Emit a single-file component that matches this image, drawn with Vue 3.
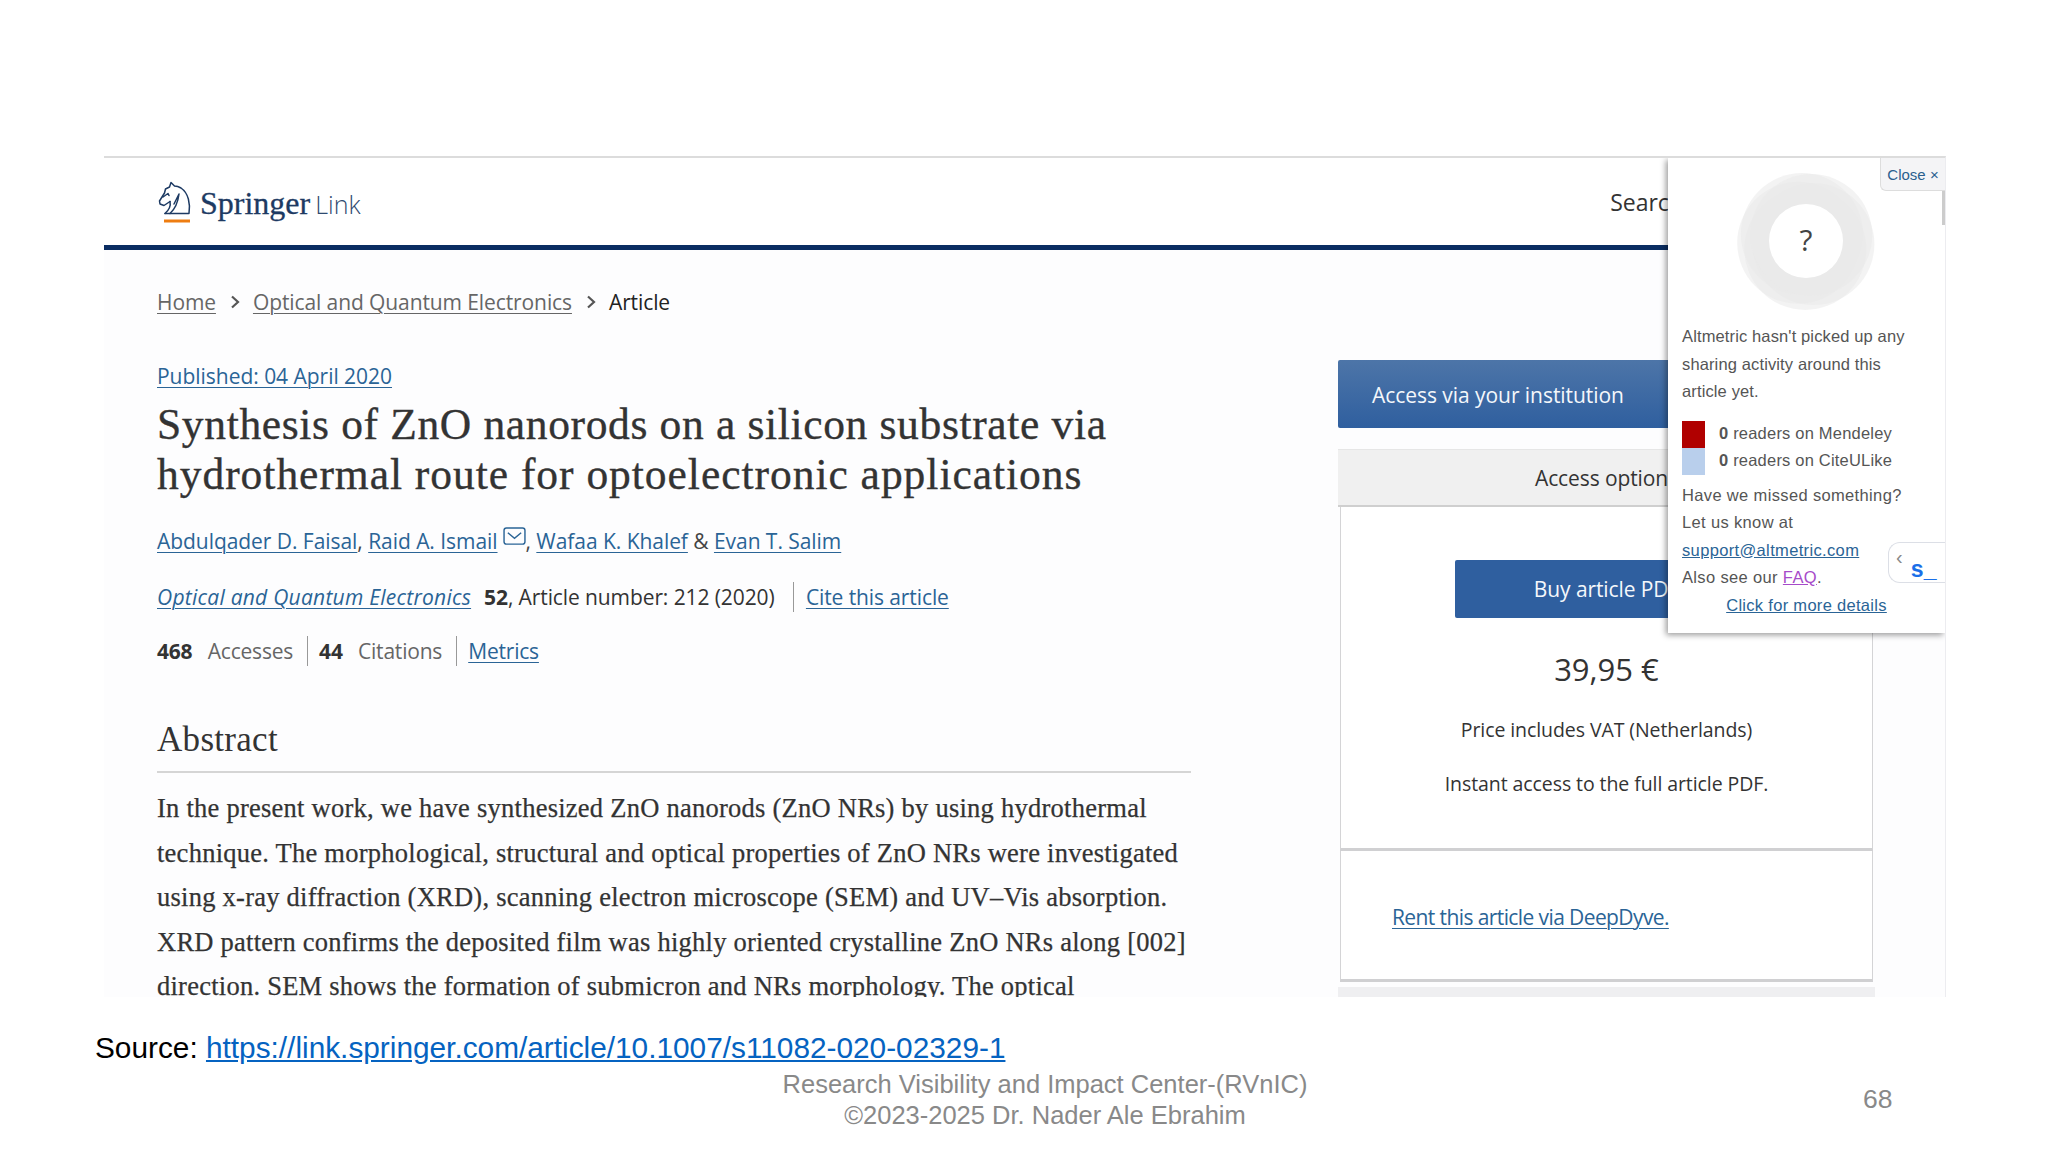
<template>
  <div class="slide">
    <div class="shot">
      <header class="topbar">
        <div class="logo">
          <svg class="logo__horse" viewBox="0 0 36 44" width="36" height="44" fill="none" stroke="#1d3a63" stroke-width="1.5" stroke-linejoin="round" stroke-linecap="round">
            <path d="M8 33.5 H32 C33.5 24 31.5 13 24 8 C21.5 6.5 19 6 17.5 6 L14 2.5 L12.5 7 L8.5 9 L7.5 13 L2.5 21 L3 24 L7 25.5 L13 21.5" />
            <path d="M13 21.5 C14 26 12 30 8 33.5 M22 14 C21 22 18 29 13 33.5 M17 24 L22 14" />
            <path d="M6 17 L11 13.5 L12 15.5" />
            <path d="M7 41 H33" stroke="#ee7d11" stroke-width="3" stroke-linecap="butt" />
          </svg>
          <span class="logo__springer">Springer</span>
          <span class="logo__link">Link</span>
        </div>
        <span class="topbar__search">Search</span>
      </header>

      <div class="page">
        <main class="article">
          <nav class="crumbs">
            <a>Home</a>
            <svg class="crumbs__sep" viewBox="0 0 10 14" width="10" height="14"><path d="M2 1.5 L8 7 L2 12.5" fill="none" stroke="#555" stroke-width="2.2" /></svg>
            <a>Optical and Quantum Electronics</a>
            <svg class="crumbs__sep" viewBox="0 0 10 14" width="10" height="14"><path d="M2 1.5 L8 7 L2 12.5" fill="none" stroke="#555" stroke-width="2.2" /></svg>
            <span>Article</span>
          </nav>
          <a class="link published">Published: 04 April 2020</a>
          <h1 class="title">Synthesis of ZnO nanorods on a silicon substrate via <span class="title__second">hydrothermal route for optoelectronic applications</span></h1>
          <p class="authors">
            <a class="link">Abdulqader D. Faisal</a>, <a class="link">Raid A. Ismail</a>
            <svg class="mail" viewBox="0 0 24 20" width="23" height="19" fill="none" stroke="#2a6496" stroke-width="1.5"><rect x="1" y="1" width="22" height="17" rx="2.5" /><path d="M5 6 L12 12 L19 6" /></svg>, <a class="link">Wafaa K. Khalef</a> &amp; <a class="link">Evan T. Salim</a>
          </p>
          <p class="journal">
            <a class="link journal__name">Optical and Quantum Electronics</a>
            <b>52</b>, Article number: 212 (2020)
            <a class="link journal__cite">Cite this article</a>
          </p>
          <ul class="metrics">
            <li><b>468</b> Accesses</li>
            <li><b>44</b> Citations</li>
            <li><a class="link">Metrics</a></li>
          </ul>
          <h2 class="abstract-title">Abstract</h2>
          <p class="abstract">
            In the present work, we have synthesized ZnO nanorods (ZnO NRs) by using hydrothermal<br />
            technique. The morphological, structural and optical properties of ZnO NRs were investigated<br />
            using x-ray diffraction (XRD), scanning electron microscope (SEM) and UV–Vis absorption.<br />
            XRD pattern confirms the deposited film was highly oriented crystalline ZnO NRs along [002]<br />
            direction. SEM shows the formation of submicron and NRs morphology. The optical
          </p>
        </main>

        <aside class="side">
          <button class="side__institution">Access via your institution</button>
          <div class="side__head">Access options</div>
          <section class="side__box side__box--buy">
            <button class="side__buy">Buy article PDF</button>
            <p class="side__price">39,95 €</p>
            <p class="side__note">Price includes VAT (Netherlands)</p>
            <p class="side__note side__note--last">Instant access to the full article PDF.</p>
          </section>
          <section class="side__box side__box--rent">
            <a class="link">Rent this article via DeepDyve.</a>
          </section>
          <div class="side__foot"></div>
        </aside>
      </div>

      <div class="popup">
        <span class="popup__close">Close ×</span>
        <span class="popup__scroll"></span>
        <div class="donut">
          <svg viewBox="0 0 140 140" width="140" height="140">
            <circle v-for="c in lobes" :key="c.x" :cx="c.x" :cy="c.y" r="61" fill="#e9e9e9" fill-opacity="0.55" />
            <circle cx="70" cy="70" r="37" fill="#fff" />
          </svg>
          <span class="donut__mark">?</span>
        </div>
        <p class="popup__text">Altmetric hasn't picked up any<br />sharing activity around this<br />article yet.</p>
        <div class="readers">
          <div class="readers__row"><i class="readers__swatch readers__swatch--red"></i><span><b>0</b> readers on Mendeley</span></div>
          <div class="readers__row"><i class="readers__swatch readers__swatch--blue"></i><span><b>0</b> readers on CiteULike</span></div>
        </div>
        <p class="popup__text popup__text--help">
          Have we missed something?<br />
          Let us know at<br />
          <a class="popup__link">support@altmetric.com</a><br />
          Also see our <a class="popup__faq">FAQ</a>.
        </p>
        <a class="popup__link popup__more">Click for more details</a>
        <div class="scite"><span class="scite__arrow">‹</span><span class="scite__mark">s_</span></div>
      </div>
    </div>

    <p class="source">Source: <a>https://link.springer.com/article/10.1007/s11082-020-02329-1</a></p>

    <footer class="footer">
      <p class="footer__text">Research Visibility and Impact Center-(RVnIC)<br />©2023-2025 Dr. Nader Ale Ebrahim</p>
      <span class="footer__page">68</span>
    </footer>
  </div>
</template>

<script setup>
// overlapping discs of the empty altmetric badge
const lobes = Array.from({ length: 5 }, (_, i) => {
  const angle = (i / 5) * Math.PI * 2 + 0.4
  return {
    x: +(70 + Math.cos(angle) * 8).toFixed(1),
    y: +(70 + Math.sin(angle) * 8).toFixed(1)
  }
})
</script>

<style>
html,
body {
  margin: 0;
  background: #fff;
}
</style>

<style scoped>
.slide {
  width: 2048px;
  height: 1152px;
  overflow: hidden;
  background: #fff;
  font-family: "Open Sans", sans-serif;
}

p,
h1,
h2,
ul {
  margin: 0;
  padding: 0;
}

.shot {
  position: relative;
  width: 1842px;
  height: 841px;
  margin: 156px 0 0 104px;
  overflow: hidden;
  background: #fdfdfe;
  border-top: 2px solid #dcdcdc;
  border-right: 1px solid #ececf0;
  box-sizing: border-box;
}

.topbar {
  display: flex;
  align-items: center;
  justify-content: space-between;
  height: 87px;
  padding: 0 262px 0 53px;
  background: #fff;
  border-bottom: 5px solid #0a2d62;
}

.logo {
  display: flex;
  align-items: baseline;
  padding-top: 6px;
}

.logo__horse {
  align-self: center;
  margin-right: 7px;
  margin-top: -5px;
}

.logo__springer {
  font-family: "Liberation Serif", serif;
  font-size: 32px;
  color: #1d3a63;
  -webkit-text-stroke: 0.3px #1d3a63;
}

.logo__link {
  margin-left: 5px;
  font-size: 25px;
  font-weight: 300;
  color: #2f4a70;
}

.topbar__search {
  font-size: 23px;
  color: #333;
}

.page {
  display: flex;
  padding-left: 53px;
  color: #333;
}

.article {
  width: 1034px;
  flex: none;
}

.link,
.crumbs a {
  text-decoration: underline;
  text-underline-offset: 3px;
  text-decoration-thickness: 1px;
}

.link {
  color: #2a6496;
}

.crumbs {
  display: flex;
  align-items: center;
  height: 30px;
  margin-top: 37px;
  font-size: 21px;
  letter-spacing: -0.1px;
  color: #222;
}

.crumbs a {
  color: #666;
}

.crumbs__sep {
  margin: 0 13px 0 14px;
}

.published {
  display: block;
  margin-top: 44px;
  height: 30px;
  line-height: 30px;
  font-size: 21px;
  letter-spacing: -0.03px;
}

.title {
  margin-top: 8px;
  width: 1020px;
  font-family: "Liberation Serif", serif;
  font-size: 43.5px;
  line-height: 50px;
  font-weight: 400;
  letter-spacing: 0.65px;
  color: #333;
  -webkit-text-stroke: 0.35px #333;
}

.title__second {
  display: block;
  letter-spacing: 0.97px;
}

.authors,
.journal,
.metrics {
  font-size: 21px;
  line-height: 30px;
  letter-spacing: -0.1px;
}

.authors {
  margin-top: 27px;
  color: #444;
  letter-spacing: -0.05px;
}

.mail {
  margin-left: 5px;
  vertical-align: 3px;
}

.journal {
  margin-top: 26px;
}

.journal__name {
  font-style: italic;
  margin-right: 13px;
  letter-spacing: 0.25px;
}

.journal__cite {
  margin-left: 13px;
  padding-left: 12px;
  border-left: 1px solid #999;
  display: inline-block;
}

.metrics {
  display: flex;
  margin-top: 24px;
  list-style: none;
  color: #666;
  letter-spacing: -0.2px;
}

.metrics b {
  margin-right: 10px;
  color: #333;
}

.metrics li + li {
  margin-left: 14px;
  padding-left: 11px;
  border-left: 1px solid #999;
}

.abstract-title {
  margin-top: 53px;
  padding-bottom: 12px;
  height: 40px;
  line-height: 42px;
  font-family: "Liberation Serif", serif;
  font-size: 35px;
  font-weight: 400;
  letter-spacing: 0.3px;
  color: #333;
  border-bottom: 2px solid #d5d5d5;
}

.abstract {
  margin-top: 13px;
  font-family: "Liberation Serif", serif;
  font-size: 26.5px;
  line-height: 44.6px;
  letter-spacing: 0.25px;
  white-space: nowrap;
  color: #333;
  -webkit-text-stroke: 0.25px #333;
}

.side {
  width: 537px;
  margin-left: 147px;
  flex: none;
}

.side__institution,
.side__buy {
  display: block;
  border: 0;
  border-radius: 2px;
  font-family: "Open Sans", sans-serif;
  color: #f4f7fb;
}

.side__institution {
  width: 100%;
  height: 68px;
  margin-top: 110px;
  padding: 2px 0 0 34px;
  text-align: left;
  font-size: 21px;
  letter-spacing: -0.05px;
  background: linear-gradient(#4d75a8, #2f5f9f);
}

.side__head {
  margin-top: 21px;
  height: 58px;
  line-height: 56px;
  text-align: center;
  font-size: 21px;
  letter-spacing: -0.1px;
  background: #f0f0f0;
  border-top: 1px solid #e6e6e6;
  border-bottom: 2px solid #cfcfcf;
  box-sizing: border-box;
}

.side__box {
  margin: 0 2px;
  background: #fff;
  border: 1px solid #d4d4d6;
  border-top: 0;
  border-bottom: 3px solid #d0d0d2;
  box-sizing: border-box;
}

.side__box--buy {
  height: 344px;
  padding-top: 53px;
  text-align: center;
}

.side__box--rent {
  height: 131px;
  padding: 52px 0 0 51px;
  font-size: 21px;
  letter-spacing: -0.6px;
}

.side__buy {
  width: 304px;
  height: 58px;
  margin: 0 auto;
  font-size: 21px;
  letter-spacing: -0.1px;
  background: #2f5f9f;
}

.side__price {
  margin-top: 31px;
  font-size: 31px;
  line-height: 40px;
}

.side__note {
  margin-top: 26px;
  font-size: 19.5px;
  line-height: 30px;
  letter-spacing: -0.08px;
}

.side__note + .side__note {
  margin-top: 24px;
}

.side__foot {
  height: 40px;
  margin-top: 5px;
  background: #efeff1;
}

.popup {
  position: absolute;
  top: 0;
  left: 1564px;
  width: 277px;
  height: 475px;
  padding-left: 14px;
  box-sizing: border-box;
  background: #fff;
  box-shadow: -2px 2px 6px rgba(0, 0, 0, 0.4);
  font-family: "Liberation Sans", sans-serif;
  font-size: 16.5px;
  line-height: 27.5px;
  letter-spacing: 0.13px;
  color: #555;
}

.popup__close {
  position: absolute;
  top: 0;
  right: 0;
  width: 65px;
  height: 33px;
  line-height: 33px;
  text-align: center;
  font-size: 15px;
  letter-spacing: 0;
  color: #2a5f8e;
  background: #f4f4f6;
  border: 1px solid #ddd;
  border-width: 0 0 1px 1px;
  border-bottom-left-radius: 6px;
  box-sizing: border-box;
}

.popup__scroll {
  position: absolute;
  top: 33px;
  right: 0;
  width: 3px;
  height: 34px;
  background: #ccc;
}

.donut {
  position: relative;
  width: 140px;
  height: 140px;
  margin: 13px 0 0 54px;
}

.donut svg {
  display: block;
}

.donut__mark {
  position: absolute;
  inset: 0;
  line-height: 138px;
  text-align: center;
  font-family: "Open Sans", sans-serif;
  font-size: 30px;
  color: #444;
}

.popup__text {
  margin-top: 12px;
}

.readers {
  margin-top: 15px;
  letter-spacing: 0.2px;
}

.readers__row {
  display: flex;
  align-items: center;
  height: 27px;
}

.readers__swatch {
  width: 23px;
  height: 27px;
  margin-right: 14px;
}

.readers__swatch--red {
  background: #b00000;
}

.readers__swatch--blue {
  background: #b9cfec;
}

.popup__text--help {
  margin-top: 7px;
  letter-spacing: 0.35px;
}

.popup__link {
  color: #2a6496;
  text-decoration: underline;
}

.popup__faq {
  color: #a64bc9;
  text-decoration: underline;
}

.popup__more {
  display: block;
  margin-left: -14px;
  text-align: center;
  letter-spacing: 0.3px;
}

.scite {
  position: absolute;
  left: 220px;
  top: 384px;
  width: 57px;
  height: 41px;
  display: flex;
  background: #fff;
  border: 1px solid #dcdfe6;
  border-right: 0;
  border-radius: 12px 0 0 12px;
  box-sizing: border-box;
}

.scite__arrow {
  margin: 0 0 0 7px;
  font-size: 20px;
  line-height: 28px;
  color: #888;
}

.scite__mark {
  margin: 9px 0 0 8px;
  font-size: 23px;
  line-height: 34px;
  font-weight: 700;
  color: #1a6fe8;
}

.source {
  margin: 34px 0 0 95px;
  font-family: "Liberation Sans", sans-serif;
  font-size: 29.8px;
  line-height: 34px;
  color: #000;
}

.source a {
  color: #0563c1;
  text-decoration: underline;
}

.footer {
  position: relative;
  margin-top: 4px;
  font-family: "Liberation Sans", sans-serif;
  color: #898989;
}

.footer__text {
  width: 2090px;
  text-align: center;
  font-size: 25.5px;
  line-height: 30.5px;
}

.footer__page {
  position: absolute;
  top: 15px;
  left: 1863px;
  font-size: 26.5px;
  line-height: 31px;
}
</style>
